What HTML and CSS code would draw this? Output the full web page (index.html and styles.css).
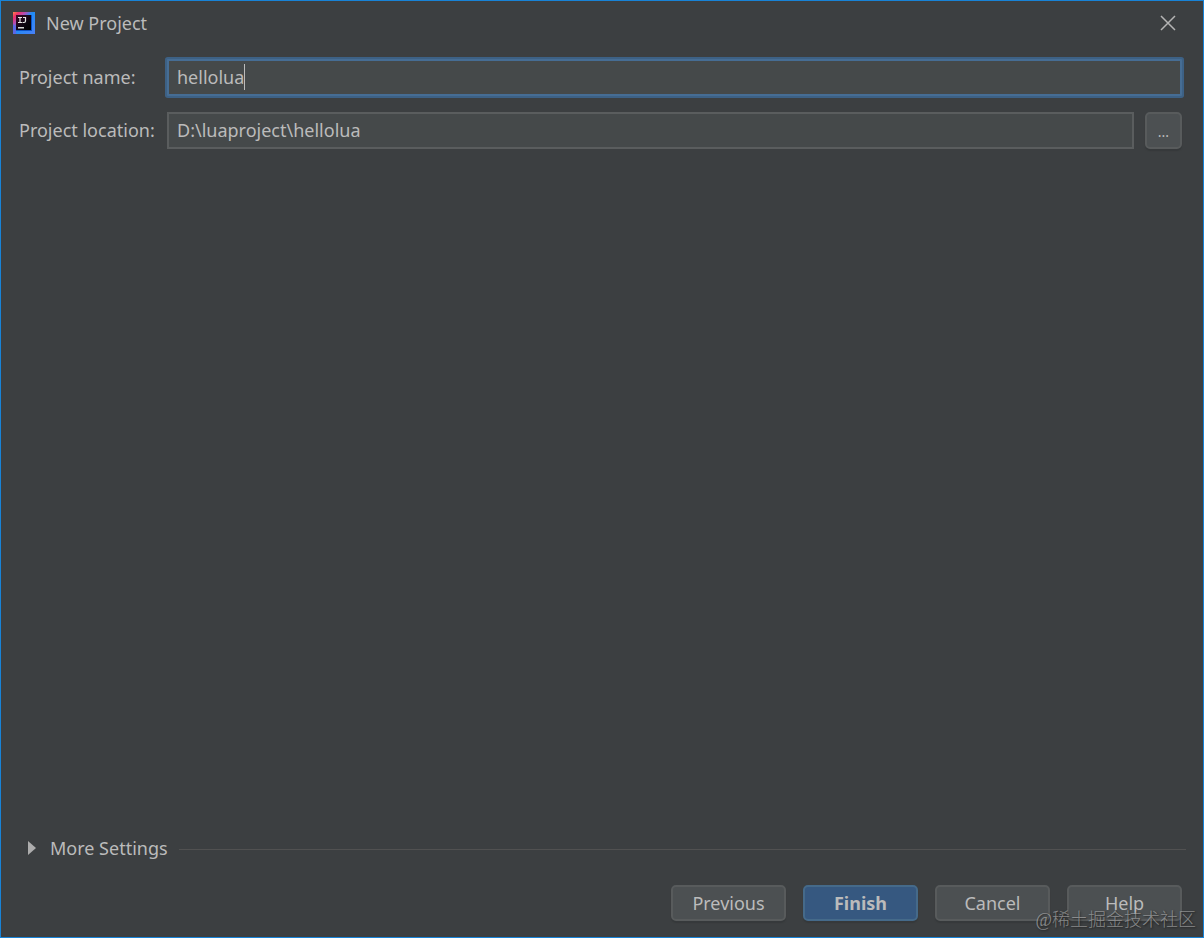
FILE: index.html
```html
<!DOCTYPE html>
<html lang="en">
<head>
<meta charset="utf-8">
<title>New Project</title>
<link rel="stylesheet" href="styles.css">
</head>
<body>
<main class="dialog">
  <header class="titlebar">
    <svg class="logo" viewBox="0 0 22 22" aria-hidden="true">
      <defs>
        <linearGradient id="frame" x1="0" y1="0" x2="1" y2="1">
          <stop offset="0" stop-color="#f98a4a"/>
          <stop offset=".14" stop-color="#f0306a"/>
          <stop offset=".3" stop-color="#b050b8"/>
          <stop offset=".45" stop-color="#1f8cf5"/>
          <stop offset="1" stop-color="#4a80f8"/>
        </linearGradient>
        <linearGradient id="core" x1="0" y1="0" x2="1" y2="1">
          <stop offset="0" stop-color="#3a0a28"/>
          <stop offset=".6" stop-color="#0c0410"/>
          <stop offset="1" stop-color="#000"/>
        </linearGradient>
      </defs>
      <rect width="22" height="22" fill="url(#frame)"/>
      <path d="M0 12l3 3v7H0z" fill="#5a68e8"/>
      <path d="M3 18h16v1H3zM18 3h1v16h-1z" fill="#0a52c8"/>
      <rect x="3" y="3" width="15" height="15" fill="url(#core)"/>
      <path d="M5 5.500h4M7 5v6M5 10.500h4M10 5.500h3M12.500 5v4q0 1.500-1.500 1.500H9.500" fill="none" stroke="#e8e8e8" stroke-width="1.200"/>
      <rect x="5" y="15" width="6" height="1.500" fill="#d8d8d8"/>
    </svg>
    <h1 class="title">New Project</h1>
    <button class="close" type="button" aria-label="Close">
      <svg viewBox="0 0 16 16" aria-hidden="true"><path d="M1 1l14 14M15 1L1 15"/></svg>
    </button>
  </header>

  <form class="form">
    <label for="name">Project name:</label>
    <div class="field field-focused">
      <input id="name" class="input" type="text" value="hellolua" spellcheck="false">
      <span class="caret"></span>
    </div>
    <label for="location">Project location:</label>
    <div class="field">
      <input id="location" class="input" type="text" value="D:\luaproject\hellolua" spellcheck="false">
      <button class="button browse" type="button" aria-label="Browse">...</button>
    </div>
  </form>

  <button class="more" type="button" aria-expanded="false">
    <svg class="arrow" viewBox="0 0 8 14" aria-hidden="true"><path d="M0 0l8 7-8 7z"/></svg>
    <span>More Settings</span>
    <span class="rule"></span>
  </button>

  <footer class="actions">
    <button class="button" type="button">Previous</button>
    <button class="button primary" type="button">Finish</button>
    <button class="button" type="button">Cancel</button>
    <button class="button" type="button">Help</button>
  </footer>
  <span class="watermark" lang="zh">@稀土掘金技术社区</span>
</main>
</body>
</html>
```
FILE: styles.css
```css
* {
  box-sizing: border-box;
}

body {
  margin: 0;
  background: #3c3f41;
  color: #bbbbbb;
  font: 18px/24px "Noto Sans", "Noto Sans CJK SC", sans-serif;
}

button,
input {
  margin: 0;
  color: inherit;
  font: inherit;
}

.dialog {
  position: relative;
  display: flex;
  flex-direction: column;
  min-height: 100vh;
  border: 1px solid #1883d7;
}

.titlebar {
  display: flex;
  align-items: center;
  height: 44px;
  padding: 0 27px 0 12px;
}

.logo {
  width: 22px;
  height: 22px;
}

.title {
  flex: 1;
  margin: 0 0 0 11px;
  font-size: 18px;
  font-weight: 400;
}

.close {
  display: flex;
  padding: 0;
  border: 0;
  background: none;
}

.close svg {
  width: 16px;
  height: 16px;
  fill: none;
  stroke: #b4b4b4;
  stroke-width: 1.5;
}

.form {
  display: grid;
  grid-template-columns: 140px 1fr;
  gap: 16px 8px;
  align-items: center;
  padding: 14px 21px 0 18px;
}

.form label {
  padding-bottom: 2px;
  white-space: nowrap;
}

.field {
  position: relative;
  display: flex;
  gap: 11px;
}

.input {
  flex: 1;
  min-width: 0;
  height: 37px;
  padding: 0 8px 2px;
  border: 2px solid #5a5d5e;
  border-radius: 0;
  outline: 0;
  background: #45494a;
}

.field-focused .input {
  border-color: #466d94;
  box-shadow: 0 0 0 2px #3d6185;
  border-radius: 1px;
}

.caret {
  position: absolute;
  top: 5px;
  left: 77px;
  width: 1px;
  height: 26px;
  background: #bbbbbb;
}

.button {
  width: 115px;
  height: 36px;
  padding: 0;
  border: 2px solid #585b5c;
  border-radius: 5px;
  background: #4c5052;
  box-shadow: 0 2px 1px #36393b;
}

.browse {
  width: 37px;
  height: 37px;
  padding-top: 2px;
  font-size: 14px;
}

.primary {
  border-color: #456a8a;
  background: #365880;
  font-weight: 700;
}

.more {
  display: flex;
  align-items: center;
  margin-top: auto;
  padding: 0 17px 0 27px;
  border: 0;
  background: none;
  text-align: left;
}

.arrow {
  width: 8px;
  height: 14px;
  margin-right: 14px;
  fill: #adadad;
}

.rule {
  flex: 1;
  height: 1px;
  margin: 2px 0 0 11px;
  background: #515151;
}

.actions {
  display: flex;
  justify-content: flex-end;
  gap: 17px;
  padding: 25px 21px 16px;
}

.watermark {
  position: absolute;
  right: 7px;
  bottom: 4px;
  color: rgba(190, 190, 190, 0.6);
  font: 300 18px/26px "Liberation Serif", "Noto Sans CJK SC", serif;
  text-shadow: 1px 1px 2px #222222;
  pointer-events: none;
}
```
